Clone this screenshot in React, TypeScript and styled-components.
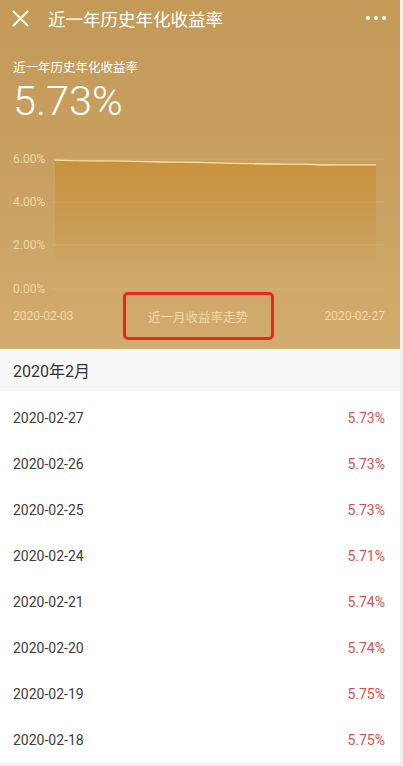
import React from "react";
import styled, { createGlobalStyle } from "styled-components";

const GlobalStyle = createGlobalStyle`
  html, body {
    margin: 0;
    padding: 0;
    background: #efefef;
  }
  body {
    font-family: Roboto, "Noto Sans CJK SC", sans-serif;
  }
`;

// 近一月每日年化收益率 (%)
const trend = [
  5.95, 5.92, 5.91, 5.91, 5.9, 5.88, 5.86, 5.85, 5.84, 5.82,
  5.8, 5.78, 5.77, 5.76, 5.76, 5.72, 5.73, 5.73, 5.73,
];

const rows = [
  { date: "2020-02-27", rate: "5.73%" },
  { date: "2020-02-26", rate: "5.73%" },
  { date: "2020-02-25", rate: "5.73%" },
  { date: "2020-02-24", rate: "5.71%" },
  { date: "2020-02-21", rate: "5.74%" },
  { date: "2020-02-20", rate: "5.74%" },
  { date: "2020-02-19", rate: "5.75%" },
  { date: "2020-02-18", rate: "5.75%" },
];

const yTicks = [
  { label: "6.00%", y: 14 },
  { label: "4.00%", y: 57 },
  { label: "2.00%", y: 100 },
  { label: "0.00%", y: 144 },
];

const X0 = 55;
const X1 = 376;
const Y_ZERO = 144;
const PX_PER_PCT = 21.67;

const TrendChart = () => {
  const step = (X1 - X0) / (trend.length - 1);
  const pts = trend.map((v, i) => [X0 + i * step, Y_ZERO - v * PX_PER_PCT]);
  const line = pts.map((p, i) => `${i ? "L" : "M"}${p[0].toFixed(1)},${p[1].toFixed(1)}`).join(" ");
  const area = `${line} L${X1},${Y_ZERO} L${X0},${Y_ZERO} Z`;

  return (
    <ChartSvg viewBox="0 0 400 147" width={400} height={147}>
      <defs>
        <linearGradient id="areaFill" x1="0" y1="0" x2="0" y2="1">
          <stop offset="0%" stopColor="#c8923b" stopOpacity={0.95} />
          <stop offset="45%" stopColor="#c8923b" stopOpacity={0.45} />
          <stop offset="85%" stopColor="#c8923b" stopOpacity={0} />
        </linearGradient>
      </defs>
      {yTicks.map((t) => (
        <g key={t.label}>
          <line x1={52} x2={385} y1={t.y} y2={t.y} stroke="rgba(255,255,255,0.13)" strokeWidth={1} />
          <text x={13} y={t.y + 4} fontSize={12} fill="#eed6a6" fontFamily="Roboto, sans-serif">
            {t.label}
          </text>
        </g>
      ))}
      <path d={area} fill="url(#areaFill)" />
      <path d={line} fill="none" stroke="#f8e3ab" strokeWidth={1.3} />
    </ChartSvg>
  );
};

const CloseIcon = () => (
  <svg width="17" height="17" viewBox="0 0 17 17">
    <path d="M1.5 1.5 L15.5 15.5 M15.5 1.5 L1.5 15.5" stroke="#fff" strokeWidth="2" strokeLinecap="round" />
  </svg>
);

const App = () => {
  return (
    <Page>
      <GlobalStyle />
      <Hero>
        <NavBar>
          <CloseIcon />
          <NavTitle>近一年历史年化收益率</NavTitle>
          <More>
            <Dot />
            <Dot />
            <Dot />
          </More>
        </NavBar>
        <Summary>
          <SummaryLabel>近一年历史年化收益率</SummaryLabel>
          <SummaryValue>5.73%</SummaryValue>
        </Summary>
        <ChartWrap>
          <TrendChart />
        </ChartWrap>
        <AxisRow>
          <AxisDate>2020-02-03</AxisDate>
          <ChartCaption>近一月收益率走势</ChartCaption>
          <AxisDate $right>2020-02-27</AxisDate>
        </AxisRow>
      </Hero>
      <MonthHeader>2020年2月</MonthHeader>
      <List>
        {rows.map((r) => (
          <Row key={r.date}>
            <RowDate>{r.date}</RowDate>
            <RowRate>{r.rate}</RowRate>
          </Row>
        ))}
      </List>
    </Page>
  );
};

export default App;

const Page = styled.div`
  width: 400px;
  min-height: 766px;
  background: #efefef;
`;

const Hero = styled.section`
  background: linear-gradient(180deg, #c39a58 0%, #c9a061 50%, #d2ab6e 100%);
  color: #fff;
  padding-bottom: 9px;
`;

const NavBar = styled.div`
  height: 36px;
  display: flex;
  align-items: center;
  padding: 0 13px 0 12px;
`;

const NavTitle = styled.div`
  margin-left: 19px;
  font-size: 17.5px;
  color: #fff;
  flex: 1;
  white-space: nowrap;
`;

const More = styled.div`
  display: flex;
  gap: 3.5px;
  align-items: center;
  padding-right: 1px;
`;

const Dot = styled.span`
  width: 4.5px;
  height: 4.5px;
  border-radius: 50%;
  background: #fff;
`;

const Summary = styled.div`
  padding: 23px 13px 0;
`;

const SummaryLabel = styled.div`
  font-size: 12.5px;
  line-height: 17px;
  color: #fff;
`;

const SummaryValue = styled.div`
  font-size: 41.5px;
  line-height: 49px;
  font-weight: 300;
  color: #fff;
`;

const ChartWrap = styled.div`
  margin-top: 20px;
  height: 147px;
`;

const ChartSvg = styled.svg`
  display: block;
  overflow: visible;
`;

const AxisRow = styled.div`
  display: grid;
  grid-template-columns: 1fr 151px 1fr;
  align-items: center;
  height: 48px;
  padding: 0 15px 0 13px;
  margin-left: -2px;
`;

const AxisDate = styled.span<{ $right?: boolean }>`
  font-size: 12px;
  color: #f0d8a9;
  text-align: ${(p) => (p.$right ? "right" : "left")};
  padding-left: ${(p) => (p.$right ? "0" : "2px")};
`;

const ChartCaption = styled.div`
  height: 48px;
  box-sizing: border-box;
  border: 3px solid #e8281d;
  border-radius: 5px;
  display: flex;
  align-items: center;
  justify-content: center;
  font-size: 12.5px;
  color: #f0d8a9;
`;

const MonthHeader = styled.div`
  height: 42px;
  display: flex;
  align-items: center;
  padding-left: 13px;
  background: #f8f8f8;
  font-size: 16px;
  color: #333;
`;

const List = styled.div`
  background: #fff;
  padding-top: 4px;
`;

const Row = styled.div`
  height: 46px;
  display: flex;
  align-items: center;
  justify-content: space-between;
  padding: 0 15px 0 13px;
`;

const RowDate = styled.span`
  font-size: 14px;
  color: #3d3d3d;
`;

const RowRate = styled.span`
  font-size: 14px;
  color: #d8504f;
`;
